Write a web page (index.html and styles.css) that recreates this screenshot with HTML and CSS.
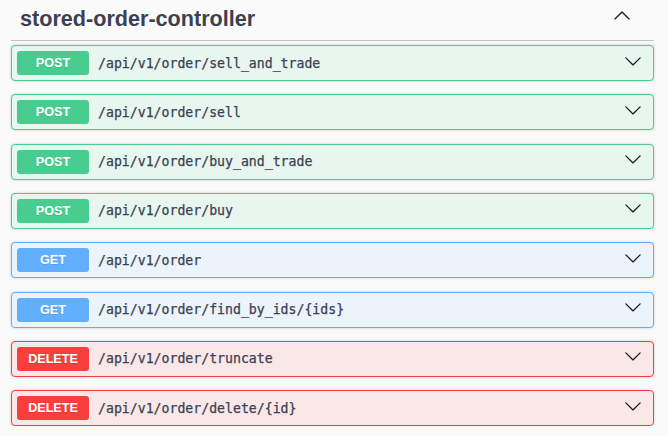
FILE: index.html
```html
<!DOCTYPE html>
<html lang="en">
<head>
<meta charset="utf-8">
<title>stored-order-controller</title>
<link rel="stylesheet" href="styles.css">
</head>
<body>
<div class="tag-section">
  <div class="tag-header">
    <h3 class="tag-title">stored-order-controller</h3>
    <svg class="arrow arrow-up" viewBox="0 0 20 20" width="18" height="18" aria-hidden="true"><path d="M17.418 14.908c.272.268.709.268.979 0s.271-.701 0-.969l-7.908-7.83c-.27-.268-.707-.268-.979 0l-7.908 7.83c-.27.268-.27.701 0 .969.271.268.709.268.979 0L10 7.767l7.418 7.141z"/></svg>
  </div>
  <div class="ops">
    <div class="op op-post"><span class="method">POST</span><span class="path">/api/v1/order/sell_and_trade</span><svg class="arrow arrow-down" viewBox="0 0 20 20" width="18" height="18" aria-hidden="true"><path d="M17.418 6.109c.272-.268.709-.268.979 0s.271.701 0 .969l-7.908 7.83c-.27.268-.707.268-.979 0l-7.908-7.83c-.27-.268-.27-.701 0-.969.271-.268.709-.268.979 0L10 13.25l7.418-7.141z"/></svg></div>
    <div class="op op-post"><span class="method">POST</span><span class="path">/api/v1/order/sell</span><svg class="arrow arrow-down" viewBox="0 0 20 20" width="18" height="18" aria-hidden="true"><path d="M17.418 6.109c.272-.268.709-.268.979 0s.271.701 0 .969l-7.908 7.83c-.27.268-.707.268-.979 0l-7.908-7.83c-.27-.268-.27-.701 0-.969.271-.268.709-.268.979 0L10 13.25l7.418-7.141z"/></svg></div>
    <div class="op op-post"><span class="method">POST</span><span class="path">/api/v1/order/buy_and_trade</span><svg class="arrow arrow-down" viewBox="0 0 20 20" width="18" height="18" aria-hidden="true"><path d="M17.418 6.109c.272-.268.709-.268.979 0s.271.701 0 .969l-7.908 7.83c-.27.268-.707.268-.979 0l-7.908-7.83c-.27-.268-.27-.701 0-.969.271-.268.709-.268.979 0L10 13.25l7.418-7.141z"/></svg></div>
    <div class="op op-post"><span class="method">POST</span><span class="path">/api/v1/order/buy</span><svg class="arrow arrow-down" viewBox="0 0 20 20" width="18" height="18" aria-hidden="true"><path d="M17.418 6.109c.272-.268.709-.268.979 0s.271.701 0 .969l-7.908 7.83c-.27.268-.707.268-.979 0l-7.908-7.83c-.27-.268-.27-.701 0-.969.271-.268.709-.268.979 0L10 13.25l7.418-7.141z"/></svg></div>
    <div class="op op-get"><span class="method">GET</span><span class="path">/api/v1/order</span><svg class="arrow arrow-down" viewBox="0 0 20 20" width="18" height="18" aria-hidden="true"><path d="M17.418 6.109c.272-.268.709-.268.979 0s.271.701 0 .969l-7.908 7.83c-.27.268-.707.268-.979 0l-7.908-7.83c-.27-.268-.27-.701 0-.969.271-.268.709-.268.979 0L10 13.25l7.418-7.141z"/></svg></div>
    <div class="op op-get"><span class="method">GET</span><span class="path">/api/v1/order/find_by_ids/{ids}</span><svg class="arrow arrow-down" viewBox="0 0 20 20" width="18" height="18" aria-hidden="true"><path d="M17.418 6.109c.272-.268.709-.268.979 0s.271.701 0 .969l-7.908 7.83c-.27.268-.707.268-.979 0l-7.908-7.83c-.27-.268-.27-.701 0-.969.271-.268.709-.268.979 0L10 13.25l7.418-7.141z"/></svg></div>
    <div class="op op-delete"><span class="method">DELETE</span><span class="path">/api/v1/order/truncate</span><svg class="arrow arrow-down" viewBox="0 0 20 20" width="18" height="18" aria-hidden="true"><path d="M17.418 6.109c.272-.268.709-.268.979 0s.271.701 0 .969l-7.908 7.83c-.27.268-.707.268-.979 0l-7.908-7.83c-.27-.268-.27-.701 0-.969.271-.268.709-.268.979 0L10 13.25l7.418-7.141z"/></svg></div>
    <div class="op op-delete"><span class="method">DELETE</span><span class="path">/api/v1/order/delete/{id}</span><svg class="arrow arrow-down" viewBox="0 0 20 20" width="18" height="18" aria-hidden="true"><path d="M17.418 6.109c.272-.268.709-.268.979 0s.271.701 0 .969l-7.908 7.83c-.27.268-.707.268-.979 0l-7.908-7.83c-.27-.268-.27-.701 0-.969.271-.268.709-.268.979 0L10 13.25l7.418-7.141z"/></svg></div>
  </div>
</div>
</body>
</html>
```

FILE: styles.css
```css
html, body {
  margin: 0;
  padding: 0;
  background: #fafafa;
}

body {
  font-family: "Liberation Sans", Arial, sans-serif;
  color: #3b4151;
}

.tag-section {
  padding: 0 14px 0 11px;
}

.tag-header {
  display: flex;
  align-items: flex-start;
  justify-content: space-between;
  height: 40px;
  border-bottom: 1px solid rgba(59, 65, 81, 0.3);
  margin-bottom: 4px;
}

.tag-title {
  margin: 6.5px 0 0 9px;
  font-size: 21.6px;
  line-height: 24px;
  font-weight: 700;
  color: #3b4151;
}

.arrow {
  flex: none;
  fill: #1b1b1b;
}

.arrow-up {
  margin: 5.5px 23px 0 0;
}

.ops {
  display: flex;
  flex-direction: column;
  gap: 13.33px;
}

.op {
  display: flex;
  align-items: center;
  height: 36px;
  box-sizing: border-box;
  padding: 0 11px 0 5px;
  border: 1px solid;
  border-radius: 4px;
  box-shadow: 0 0 3px rgba(0, 0, 0, 0.19);
}

.op-post {
  border-color: #49cc90;
  background: #e8f6f0;
}

.op-post .method {
  background: #49cc90;
}

.op-get {
  border-color: #61affe;
  background: #ebf3fb;
}

.op-get .method {
  background: #61affe;
}

.op-delete {
  border-color: #f93e3e;
  background: #fae7e7;
}

.op-delete .method {
  background: #f93e3e;
}

.method {
  flex: none;
  display: flex;
  align-items: center;
  justify-content: center;
  width: 72px;
  height: 24px;
  border-radius: 3px;
  color: #fff;
  font-size: 12.6px;
  font-weight: 700;
  text-shadow: 0 1px 0 rgba(0, 0, 0, 0.1);
}

.path {
  flex: 1;
  margin-left: 9px;
  font-family: "DejaVu Sans Mono", "Liberation Mono", monospace;
  font-size: 13.2px;
  font-weight: 400;
  color: #3b4151;
  -webkit-text-stroke: 0.25px #3b4151;
}

.arrow-down {
  margin-bottom: 5px;
}
```
